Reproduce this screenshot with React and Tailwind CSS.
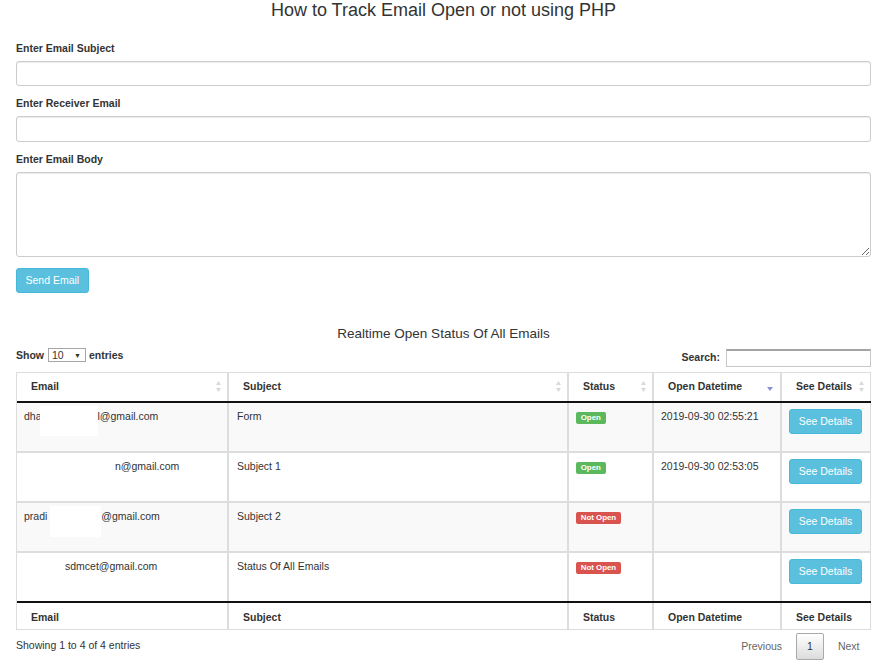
import React from 'react';

const cols = [
  { name: 'Email', w: 'w-[212px] border-r-2' },
  { name: 'Subject', w: 'w-[340px] border-r-2' },
  { name: 'Status', w: 'w-[85px] border-r-2' },
  { name: 'Open Datetime', w: 'w-[128px] border-r-2' },
  { name: 'See Details', w: 'w-[89px] border-r' },
];

const rows = [
  { subject: 'Form', open: true, time: '2019-09-30 02:55:21', striped: true },
  { subject: 'Subject 1', open: true, time: '2019-09-30 02:53:05', striped: false },
  { subject: 'Subject 2', open: false, time: '', striped: true },
  { subject: 'Status Of All Emails', open: false, time: '', striped: false },
];

const SortBoth = () => (
  <svg width="5" height="11" viewBox="0 0 5 11" className="shrink-0">
    <path d="M2.5 0L5 4H0z" fill="#d9d9d9" />
    <path d="M2.5 11L5 7H0z" fill="#d9d9d9" />
  </svg>
);

const SortDesc = () => (
  <svg width="6" height="4" viewBox="0 0 6 4" className="shrink-0 mt-[4px]">
    <path d="M0 0h6L3 4z" fill="#8c8fd2" />
  </svg>
);

// email cells carry the white redaction boxes from the original capture
const EmailCell = ({ i }) => {
  if (i === 0)
    return (
      <span className="flex items-start">
        <span>dha</span>
        <span className="inline-block w-[58px] h-[30px] -mt-[3px] -ml-[2px] bg-white" />
        <span>l@gmail.com</span>
      </span>
    );
  if (i === 1) return <span className="ml-[91px]">n@gmail.com</span>;
  if (i === 2)
    return (
      <span className="flex items-start">
        <span>pradi</span>
        <span className="inline-block w-[51px] h-[31px] -mt-[3px] ml-[3px] bg-white" />
        <span>@gmail.com</span>
      </span>
    );
  return <span className="ml-[41px]">sdmcet@gmail.com</span>;
};

const Label = ({ open }) =>
  open ? (
    <span className="inline-block bg-[#5cb85c] text-white font-bold text-[7.9px] leading-none rounded-[2px] px-[4.7px] pt-[1.8px] pb-[2.2px]">
      Open
    </span>
  ) : (
    <span className="inline-block bg-[#d9534f] text-white font-bold text-[7.9px] leading-none rounded-[2px] px-[4.7px] pt-[1.8px] pb-[2.2px]">
      Not Open
    </span>
  );

const App = () => {
  return (
    <div className="min-h-screen bg-white text-[#333] text-[10.5px] leading-[15px] font-['Liberation_Sans',Arial,sans-serif] pl-[16px] pr-[20px]">
      <h3 className="text-[18px] leading-[20px] font-normal text-center">
        How to Track Email Open or not using PHP
      </h3>

      <div className="mt-[20.5px]">
        <label className="block font-bold mb-[5px]">Enter Email Subject</label>
        <input type="text" className="block w-full h-[25.5px] border border-[#ccc] rounded-[3px] shadow-[inset_0_1px_1px_rgba(0,0,0,0.075)] outline-none" />
      </div>
      <div className="mt-[10px]">
        <label className="block font-bold mb-[5px]">Enter Receiver Email</label>
        <input type="text" className="block w-full h-[25.5px] border border-[#ccc] rounded-[3px] shadow-[inset_0_1px_1px_rgba(0,0,0,0.075)] outline-none" />
      </div>
      <div className="mt-[10px]">
        <label className="block font-bold mb-[5px]">Enter Email Body</label>
        <textarea className="block w-full h-[85.5px] border border-[#ccc] rounded-[3px] shadow-[inset_0_1px_1px_rgba(0,0,0,0.075)] outline-none" />
      </div>
      <button className="mt-[11px] block h-[25px] px-[8.5px] bg-[#5bc0de] border border-[#46b8da] rounded-[3px] text-white">
        Send Email
      </button>

      <h4 className="mt-[32.5px] text-[13.5px] leading-[15px] font-normal text-center">
        Realtime Open Status Of All Emails
      </h4>

      <div className="mt-[7px] h-[19px] flex justify-between items-start">
        <div className="flex items-center font-bold h-[15px]">
          <span>Show</span>
          <span className="ml-[4px] inline-flex items-center h-[14px] w-[38px] border border-[#a6a6a6] pl-[3px] font-normal leading-none">
            10
            <span className="ml-auto mr-[4px] text-[7px]">▼</span>
          </span>
          <span className="ml-[3px]">entries</span>
        </div>
        <div className="flex items-center mt-[1px] font-bold">
          <span>Search:</span>
          <input type="text" className="ml-[6px] w-[145px] h-[18px] border border-[#c8c8c8] border-t-2 border-t-[#a4a4a4] outline-none" />
        </div>
      </div>

      <div className="mt-[5px] border-l border-t border-[#ddd]">
        <div className="flex h-[30px] border-b-2 border-b-[#111]">
          {cols.map((c, i) => (
            <div key={c.name} className={`${c.w} border-[#ddd] shrink-0 flex items-center justify-between pl-[14px] ${i === 3 ? 'pr-[7px]' : 'pr-[6px]'} font-bold`}>
              <span>{c.name}</span>
              {i === 3 ? <SortDesc /> : <SortBoth />}
            </div>
          ))}
        </div>

        {rows.map((r, ri) => (
          <div
            key={ri}
            className={`flex ${ri < 3 ? 'h-[50px] border-b-2 border-b-[#ddd]' : 'h-[48px]'} ${r.striped ? 'bg-[#f9f9f9]' : 'bg-white'}`}
          >
            <div className={`${cols[0].w} border-[#ddd] shrink-0 pl-[7px] pt-[6px]`}>
              <EmailCell i={ri} />
            </div>
            <div className={`${cols[1].w} border-[#ddd] shrink-0 pl-[8px] pt-[6px]`}>{r.subject}</div>
            <div className={`${cols[2].w} border-[#ddd] shrink-0 pl-[7px] pt-[8px] leading-none`}>
              <Label open={r.open} />
            </div>
            <div className={`${cols[3].w} border-[#ddd] shrink-0 pl-[7px] pt-[6px]`}>{r.time}</div>
            <div className={`${cols[4].w} border-[#ddd] shrink-0 pl-[7px] pt-[6px]`}>
              <button className="block w-[73px] h-[25px] bg-[#5bc0de] border border-[#46b8da] rounded-[3px] text-white">
                See Details
              </button>
            </div>
          </div>
        ))}

        <div className="flex h-[29px] border-t-2 border-t-[#111] border-b border-b-[#ddd]">
          {cols.map((c) => (
            <div key={c.name} className={`${c.w} border-[#ddd] shrink-0 pl-[14px] pt-[7.5px] font-bold`}>
              {c.name}
            </div>
          ))}
        </div>
      </div>

      <div className="flex justify-between items-start">
        <div className="pt-[8px]">Showing 1 to 4 of 4 entries</div>
        <div className="pt-[3px] flex items-center">
          <span className="ml-[2px] px-[10.5px] py-[5px] border border-transparent text-[#666]">Previous</span>
          <span className="ml-[2px] px-[10.5px] py-[5px] border border-[#a9a9a9] rounded-[2px] bg-gradient-to-b from-white to-[#dcdcdc] text-[#333]">
            1
          </span>
          <span className="ml-[2px] px-[10.5px] py-[5px] border border-transparent text-[#666]">Next</span>
        </div>
      </div>
    </div>
  );
};

export default App;
